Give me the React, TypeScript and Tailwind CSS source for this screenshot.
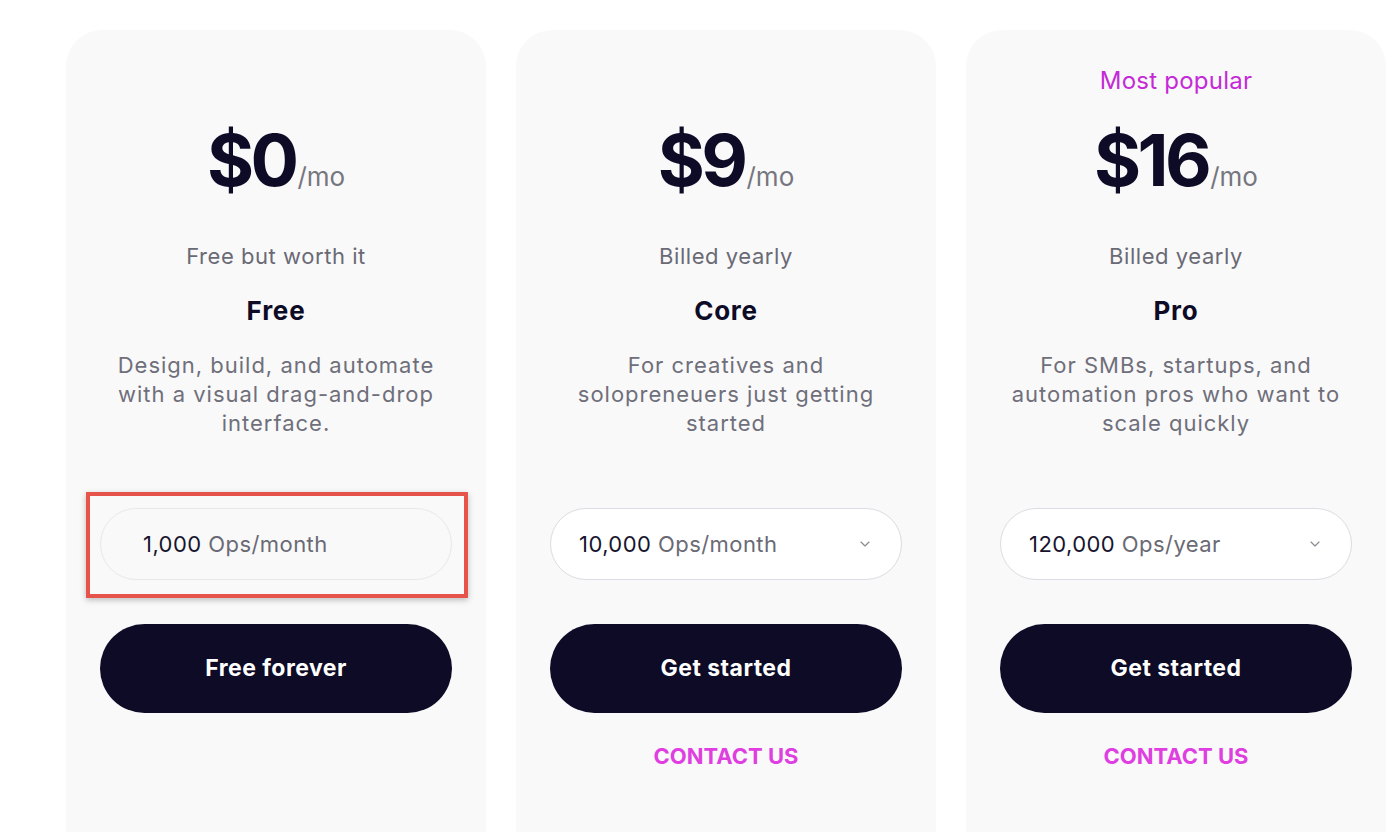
import { ChevronDown } from 'lucide-react';

interface Plan {
  tag?: string;
  price: string;
  billing: string;
  name: string;
  blurb: string;
  opsCount: string;
  opsUnit: string;
  cta: string;
  selectable: boolean;
  highlighted?: boolean;
  contact: boolean;
}

const PLANS: Plan[] = [
  {
    price: '$0',
    billing: 'Free but worth it',
    name: 'Free',
    blurb: 'Design, build, and automate with a visual drag-and-drop interface.',
    opsCount: '1,000',
    opsUnit: 'Ops/month',
    cta: 'Free forever',
    selectable: false,
    highlighted: true,
    contact: false,
  },
  {
    price: '$9',
    billing: 'Billed yearly',
    name: 'Core',
    blurb: 'For creatives and solopreneuers just getting started',
    opsCount: '10,000',
    opsUnit: 'Ops/month',
    cta: 'Get started',
    selectable: true,
    contact: true,
  },
  {
    tag: 'Most popular',
    price: '$16',
    billing: 'Billed yearly',
    name: 'Pro',
    blurb: 'For SMBs, startups, and automation pros who want to scale quickly',
    opsCount: '120,000',
    opsUnit: 'Ops/year',
    cta: 'Get started',
    selectable: true,
    contact: true,
  },
];

export default function App() {
  return (
    <div
      className="h-[832px] overflow-hidden bg-white pt-[30px] pl-[66px]"
      style={{ fontFamily: 'Inter, "Noto Sans", sans-serif' }}
    >
      <div className="flex gap-[30px]">
        {PLANS.map((p) => (
          <PlanCard key={p.name} plan={p} />
        ))}
      </div>
    </div>
  );
}

function PlanCard({ plan }: { plan: Plan }) {
  return (
    <section className="w-[420px] h-[860px] shrink-0 rounded-[36px] bg-[#f9f9fa] px-[34px] pt-[36px] flex flex-col items-center text-center">
      <p className="h-[30px] text-[24px] leading-[30px] tracking-[0.01em] text-[#c42ad6]">
        {plan.tag}
      </p>

      {/* preço */}
      <div className="mt-[28px] flex items-baseline text-[#0d0b26]">
        <span className="text-[72px] leading-[72px] font-bold tracking-[-0.05em]">
          {plan.price}
        </span>
        <span className="ml-[2px] text-[26px] text-[#76767f]">/mo</span>
      </div>

      <p className="mt-[45px] text-[22px] leading-[30px] tracking-[0.025em] text-[#6a6a75]">
        {plan.billing}
      </p>
      <h3 className="mt-[23px] text-[26px] leading-[34px] font-bold tracking-[0.03em] text-[#0d0b26]">
        {plan.name}
      </h3>
      <p className="mt-[23px] h-[87px] max-w-[340px] text-[22px] leading-[29px] text-[#6f6f7a] tracking-[0.045em]">
        {plan.blurb}
      </p>

      <div className="relative mt-[70px] w-full">
        {plan.highlighted && (
          <div className="absolute -left-[14px] -right-[16px] -top-[16px] -bottom-[18px] border-4 border-[#e5534b] shadow-[0_2px_6px_rgba(0,0,0,0.25)] pointer-events-none" />
        )}
        <div
          className={
            plan.selectable
              ? 'h-[72px] w-full rounded-full border border-[#dcdce2] bg-white pl-[28px] pr-[28px] flex items-center justify-between'
              : 'h-[72px] w-full rounded-full border border-[#e8e8ec] pl-[42px] pr-[28px] flex items-center justify-between'
          }
        >
          <span className="text-[22px] tracking-[0.02em]">
            <span className="text-[#17152e]">{plan.opsCount}</span>{' '}
            <span className="text-[#6a6a75]">{plan.opsUnit}</span>
          </span>
          {plan.selectable && (
            <ChevronDown className="size-[16px] text-[#8a8a94]" strokeWidth={1.75} />
          )}
        </div>
      </div>

      <button className="mt-[44px] h-[89px] w-full rounded-full bg-[#0d0b26] text-white text-[23px] tracking-[0.02em] font-bold">
        {plan.cta}
      </button>

      {plan.contact && (
        <a className="mt-[28px] text-[22px] leading-[30px] font-bold text-[#df3ee0]">
          CONTACT US
        </a>
      )}
    </section>
  );
}
